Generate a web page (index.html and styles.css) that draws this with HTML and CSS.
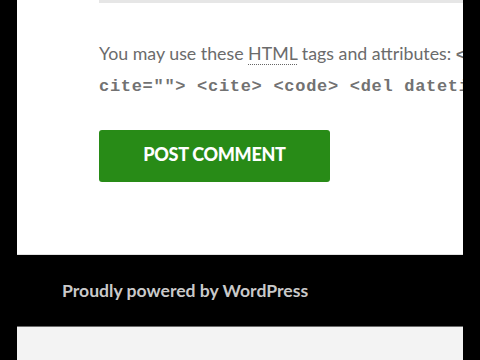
FILE: index.html
```html
<!DOCTYPE html>
<html>
<head>
    <link rel="stylesheet" href="styles.css">
</head>
<body>
    <div class="page">
        <div class="comment-form">
            <div class="textarea-edge"></div>
            <p class="form-allowed-tags">You may use these <abbr title="HyperText Markup Language">HTML</abbr> tags and attributes: <code>&lt;a href="" title=""&gt; &lt;abbr title=""&gt; &lt;acronym title=""&gt; &lt;b&gt; &lt;blockquote</code><br /><code>cite=""&gt; &lt;cite&gt; &lt;code&gt; &lt;del datetime=""&gt; &lt;em&gt; &lt;i&gt; &lt;q cite=""&gt; &lt;strike&gt; &lt;strong&gt;</code></p>
            <button type="submit" class="submit">Post Comment</button>
        </div>
        <footer class="site-footer">
            <a href="#">Proudly powered by WordPress</a>
        </footer>
        <div class="below"></div>
    </div>
</body>
</html>
```

FILE: styles.css
```css
body {
    margin: 0;
    padding: 0;
    background-color: #000;
    font-family: Lato, "Open Sans", sans-serif;
}
.page {
    margin: 0 17px;
    height: 360px;
    background-color: #fff;
    overflow: hidden;
    display: flex;
    flex-direction: column;
}
.comment-form {
    padding: 0 0 72px 82px;
    border-bottom: 1px solid #e2e2e2;
}
.textarea-edge {
    height: 3px;
    background-color: #e6e6e6;
}
.form-allowed-tags {
    margin: 36px 0 0;
    font-size: 17.8px;
    line-height: 28px;
    color: #6b6b6b;
    white-space: nowrap;
}
.form-allowed-tags abbr {
    text-decoration: none;
    border-bottom: 1px dotted #666;
}
.form-allowed-tags code {
    font-family: "Liberation Mono", monospace;
    font-size: 17px;
    font-weight: bold;
    letter-spacing: 0.7px;
    color: #727272;
}
.submit {
    display: block;
    margin-top: 29px;
    width: 231px;
    height: 52px;
    padding: 0 0 4px;
    background-color: #288b17;
    color: #fff;
    border: none;
    border-radius: 3px;
    font-family: Lato, sans-serif;
    font-weight: 900;
    font-size: 18px;
    letter-spacing: -0.3px;
    text-transform: uppercase;
    cursor: pointer;
}
.site-footer {
    background-color: #000;
    height: 71px;
    padding-left: 45px;
    display: flex;
    align-items: center;
    border-bottom: 1px solid #6a6a6a;
}
.site-footer a {
    color: #c9c9c9;
    font-weight: bold;
    font-size: 17.6px;
    text-decoration: none;
}
.below {
    flex: 1;
    background-color: #f3f3f3;
}
```
